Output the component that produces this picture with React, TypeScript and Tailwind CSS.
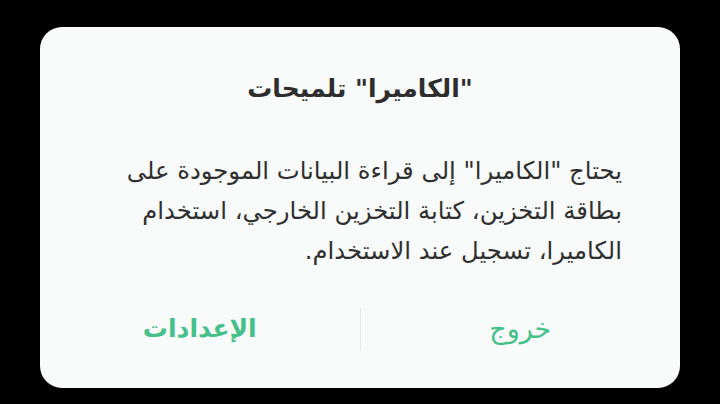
import React from "react";

export default function App() {
  return (
    <div className="w-[720px] h-[404px] bg-black flex items-start justify-center pt-[27px]" style={{ fontFamily: '"DejaVu Sans", "Noto Sans", sans-serif' }}>
      <div dir="rtl" className="w-[640px] h-[361px] bg-[#f9fbfa] rounded-[22px] flex flex-col">
        <div className="h-[124px] flex items-center justify-center pb-[2px]">
          <h1 className="text-[25px] font-bold text-[#2e2e2e] leading-none">"الكاميرا" تلميحات</h1>
        </div>
        <div className="pr-[58px] pl-[70px]">
          <p className="text-[24.3px] leading-[40px] text-[#2f2f2f] text-right">
            يحتاج "الكاميرا" إلى قراءة البيانات الموجودة على بطاقة التخزين، كتابة التخزين الخارجي، استخدام الكاميرا، تسجيل عند الاستخدام.
          </p>
        </div>
        <div className="mt-auto mb-[38px] h-[42px] flex items-center">
          <div className="flex-1 flex justify-center items-center text-[27px] text-[#45c08a]">خروج</div>
          <div className="w-px h-[42px] bg-[#e6e8e7]"></div>
          <div className="flex-1 flex justify-center items-center text-[25px] font-bold text-[#45c08a]">الإعدادات</div>
        </div>
      </div>
    </div>
  );
}
